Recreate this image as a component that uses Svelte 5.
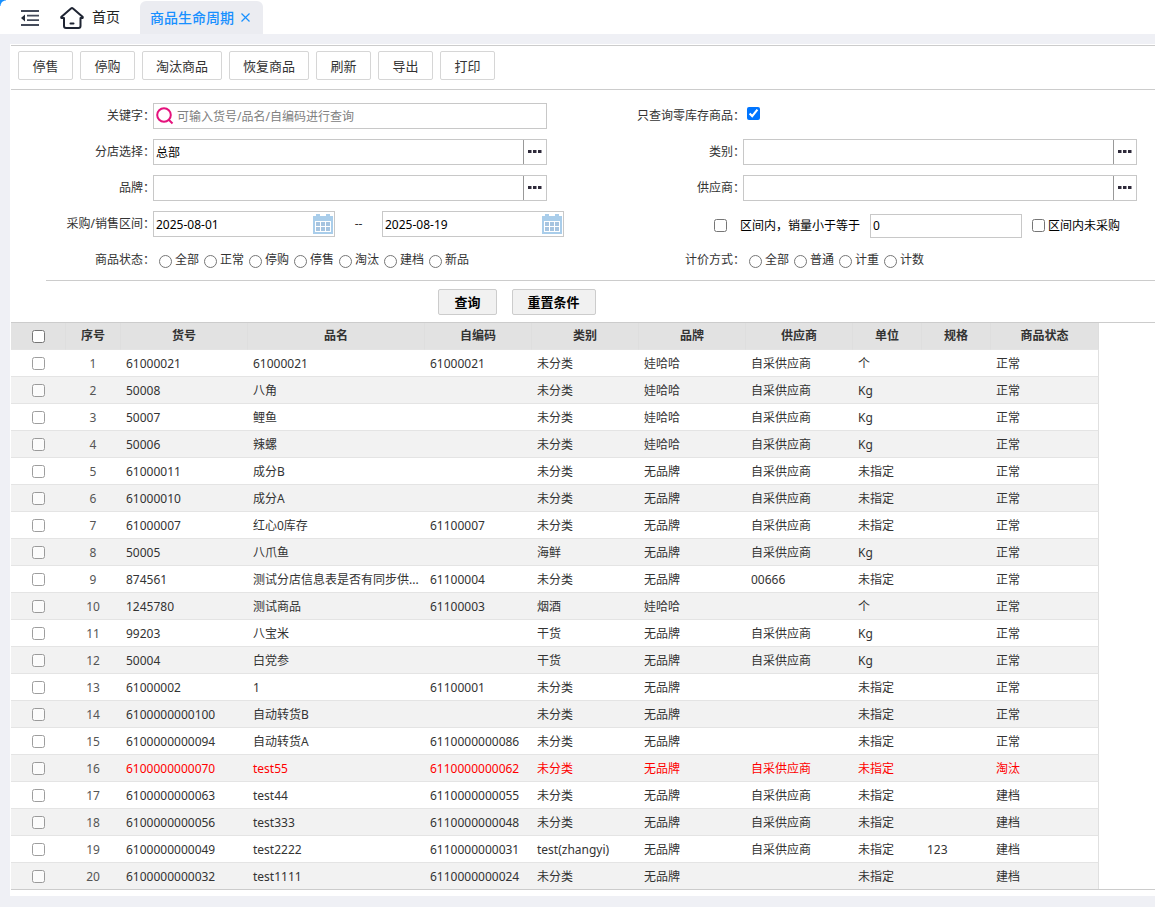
<script lang="ts">
  interface Row {
    code: string;
    name: string;
    alias?: string;
    category: string;
    brand: string;
    supplier?: string;
    unit: string;
    spec?: string;
    status: string;
  }

  const actions = ['停售', '停购', '淘汰商品', '恢复商品', '刷新', '导出', '打印'];
  const statuses = ['全部', '正常', '停购', '停售', '淘汰', '建档', '新品'];
  const pricing = ['全部', '普通', '计重', '计数'];

  const columns = [
    { title: '货号', width: 127 },
    { title: '品名', width: 177 },
    { title: '自编码', width: 107 },
    { title: '类别', width: 107 },
    { title: '品牌', width: 107 },
    { title: '供应商', width: 107 },
    { title: '单位', width: 69 },
    { title: '规格', width: 69 },
    { title: '商品状态', width: 108 }
  ];

  const OWN = '自采供应商';

  const rows: Row[] = [
    { code: '61000021', name: '61000021', alias: '61000021', category: '未分类', brand: '娃哈哈', supplier: OWN, unit: '个', status: '正常' },
    { code: '50008', name: '八角', category: '未分类', brand: '娃哈哈', supplier: OWN, unit: 'Kg', status: '正常' },
    { code: '50007', name: '鲤鱼', category: '未分类', brand: '娃哈哈', supplier: OWN, unit: 'Kg', status: '正常' },
    { code: '50006', name: '辣螺', category: '未分类', brand: '娃哈哈', supplier: OWN, unit: 'Kg', status: '正常' },
    { code: '61000011', name: '成分B', category: '未分类', brand: '无品牌', supplier: OWN, unit: '未指定', status: '正常' },
    { code: '61000010', name: '成分A', category: '未分类', brand: '无品牌', supplier: OWN, unit: '未指定', status: '正常' },
    { code: '61000007', name: '红心0库存', alias: '61100007', category: '未分类', brand: '无品牌', supplier: OWN, unit: '未指定', status: '正常' },
    { code: '50005', name: '八爪鱼', category: '海鲜', brand: '无品牌', supplier: OWN, unit: 'Kg', status: '正常' },
    { code: '874561', name: '测试分店信息表是否有同步供...', alias: '61100004', category: '未分类', brand: '无品牌', supplier: '00666', unit: '未指定', status: '正常' },
    { code: '1245780', name: '测试商品', alias: '61100003', category: '烟酒', brand: '娃哈哈', unit: '个', status: '正常' },
    { code: '99203', name: '八宝米', category: '干货', brand: '无品牌', supplier: OWN, unit: 'Kg', status: '正常' },
    { code: '50004', name: '白党参', category: '干货', brand: '无品牌', supplier: OWN, unit: 'Kg', status: '正常' },
    { code: '61000002', name: '1', alias: '61100001', category: '未分类', brand: '无品牌', unit: '未指定', status: '正常' },
    { code: '6100000000100', name: '自动转货B', category: '未分类', brand: '无品牌', unit: '未指定', status: '正常' },
    { code: '6100000000094', name: '自动转货A', alias: '6110000000086', category: '未分类', brand: '无品牌', unit: '未指定', status: '正常' },
    { code: '6100000000070', name: 'test55', alias: '6110000000062', category: '未分类', brand: '无品牌', supplier: OWN, unit: '未指定', status: '淘汰' },
    { code: '6100000000063', name: 'test44', alias: '6110000000055', category: '未分类', brand: '无品牌', supplier: OWN, unit: '未指定', status: '建档' },
    { code: '6100000000056', name: 'test333', alias: '6110000000048', category: '未分类', brand: '无品牌', supplier: OWN, unit: '未指定', status: '建档' },
    { code: '6100000000049', name: 'test2222', alias: '6110000000031', category: 'test(zhangyi)', brand: '无品牌', supplier: OWN, unit: '未指定', spec: '123', status: '建档' },
    { code: '6100000000032', name: 'test1111', alias: '6110000000024', category: '未分类', brand: '无品牌', unit: '未指定', status: '建档' }
  ];

  let keyword = $state('');
  let store = $state('总部');
  let brand = $state('');
  let category = $state('');
  let supplier = $state('');
  let dateFrom = $state('2025-08-01');
  let dateTo = $state('2025-08-19');
  let zeroStock = $state(true);
  let limitSales = $state(false);
  let maxSales = $state('0');
  let notPurchased = $state(false);
  let status = $state('');
  let priceMode = $state('');
  let selected = $state<boolean[]>(rows.map(() => false));

  function toggleAll(e: Event) {
    const checked = (e.target as HTMLInputElement).checked;
    selected = rows.map(() => checked);
  }

  function reset() {
    keyword = brand = category = supplier = status = priceMode = '';
    maxSales = '0';
    limitSales = notPurchased = false;
  }
</script>

{#snippet calendar()}
  <svg width="20" height="20" viewBox="0 0 20 20" aria-hidden="true">
    <path fill="#a9cdea" d="M0 2h3V0h4v2h6V0h4v2h3v18H0z" />
    <path fill="#fff" d="M2 7h16v11H2z" />
    <path fill="#a6c4e0" d="M3 8h4v4H3zM8 8h4v4H8zM13 8h4v4h-4zM3 13h4v4H3zM8 13h4v4H8zM13 13h4v4h-4z" />
  </svg>
{/snippet}

{#snippet dots()}
  <svg width="14" height="4" viewBox="0 0 14 4" aria-hidden="true">
    <path fill="#2f2a3a" d="M0 0h3.500v3H0zM5 0h3.500v3H5zM10 0h3.500v3h-3.500z" />
  </svg>
{/snippet}

<header class="tabs">
  <button class="icon-btn" aria-label="收起菜单">
    <svg width="20" height="18" viewBox="0 0 20 18" aria-hidden="true">
      <path fill="none" stroke="#444b5a" stroke-width="1.800" d="M1 3h18M7 7.600h12M7 12.200h12M1 17h18" />
      <path fill="#222936" d="M1 10l4-3.500v7z" />
    </svg>
  </button>
  <a class="home" href="#home">
    <svg width="24" height="24" viewBox="0 0 24 24" fill="none" stroke="#1f2533" stroke-width="2" stroke-linejoin="round" stroke-linecap="round" aria-hidden="true">
      <path d="M4 13H1.500q-.6-.6 0-1.200L11 3.500q1-.8 2 0l9.500 8.300q.6.600 0 1.200H20.500v8q0 2-2 2h-12.500q-2 0-2-2zM10.500 18.500h3" />
    </svg>
    <span>首页</span>
  </a>
  <div class="tab">
    <a href="#lifecycle">商品生命周期</a>
    <button class="icon-btn" aria-label="关闭">
      <svg width="9" height="9" viewBox="0 0 9 9" aria-hidden="true">
        <path stroke="#1890ff" stroke-width="1.200" d="M.5.5l8 8M8.500.5l-8 8" />
      </svg>
    </button>
  </div>
</header>

<main>
  <div class="toolbar">
    {#each actions as action}
      <button>{action}</button>
    {/each}
  </div>

  <div class="filters">
    <label class="caption" for="keyword">关键字：</label>
    <div class="box">
      <svg class="search" width="18" height="18" viewBox="0 0 18 18" fill="none" stroke="#e5127d" stroke-width="2" aria-hidden="true">
        <circle cx="8" cy="8" r="6.800" />
        <path d="M12.500 12.500l4 4" />
      </svg>
      <input id="keyword" type="text" placeholder="可输入货号/品名/自编码进行查询" bind:value={keyword} />
    </div>
    <label class="caption" for="zero">只查询零库存商品：</label>
    <div class="line zero">
      <input id="zero" type="checkbox" bind:checked={zeroStock} />
    </div>

    <label class="caption" for="store">分店选择：</label>
    <div class="box">
      <input id="store" type="text" bind:value={store} />
      <button class="more" aria-label="选择分店">{@render dots()}</button>
    </div>
    <label class="caption" for="category">类别：</label>
    <div class="box">
      <input id="category" type="text" bind:value={category} />
      <button class="more" aria-label="选择类别">{@render dots()}</button>
    </div>

    <label class="caption" for="brand">品牌：</label>
    <div class="box">
      <input id="brand" type="text" bind:value={brand} />
      <button class="more" aria-label="选择品牌">{@render dots()}</button>
    </div>
    <label class="caption" for="supplier">供应商：</label>
    <div class="box">
      <input id="supplier" type="text" bind:value={supplier} />
      <button class="more" aria-label="选择供应商">{@render dots()}</button>
    </div>

    <label class="caption" for="from">采购/销售区间：</label>
    <div class="line">
      <div class="box date">
        <input id="from" type="text" bind:value={dateFrom} />
        <button class="icon-btn" aria-label="选择开始日期">{@render calendar()}</button>
      </div>
      <span class="dash">--</span>
      <div class="box date">
        <input type="text" aria-label="结束日期" bind:value={dateTo} />
        <button class="icon-btn" aria-label="选择结束日期">{@render calendar()}</button>
      </div>
    </div>
    <div class="line range">
      <input id="limit" type="checkbox" bind:checked={limitSales} />
      <label class="limit" for="limit">区间内，销量小于等于</label>
      <div class="box amount">
        <input type="text" aria-label="销量" bind:value={maxSales} />
      </div>
      <label class="check"><input type="checkbox" bind:checked={notPurchased} />区间内未采购</label>
    </div>

    <span class="caption">商品状态：</span>
    <div class="line radios" role="radiogroup" aria-label="商品状态">
      {#each statuses as s}
        <label><input type="radio" name="status" value={s} bind:group={status} />{s}</label>
      {/each}
    </div>
    <span class="caption">计价方式：</span>
    <div class="line radios" role="radiogroup" aria-label="计价方式">
      {#each pricing as p}
        <label><input type="radio" name="pricing" value={p} bind:group={priceMode} />{p}</label>
      {/each}
    </div>
  </div>

  <div class="submit">
    <button>查询</button>
    <button onclick={reset}>重置条件</button>
  </div>

  <div class="grid">
    <table>
      <colgroup>
        <col style="width:55px" />
        <col style="width:55px" />
        {#each columns as col}
          <col style="width:{col.width}px" />
        {/each}
      </colgroup>
      <thead>
        <tr>
          <th><input type="checkbox" aria-label="全选" onchange={toggleAll} /></th>
          <th>序号</th>
          {#each columns as col}
            <th>{col.title}</th>
          {/each}
        </tr>
      </thead>
      <tbody>
        {#each rows as row, i}
          <tr class:retired={row.status === '淘汰'}>
            <td class="pick"><input type="checkbox" aria-label="选择 {row.code}" bind:checked={selected[i]} /></td>
            <td class="index">{i + 1}</td>
            <td>{row.code}</td>
            <td>{row.name}</td>
            <td>{row.alias ?? ''}</td>
            <td>{row.category}</td>
            <td>{row.brand}</td>
            <td>{row.supplier ?? ''}</td>
            <td>{row.unit}</td>
            <td>{row.spec ?? ''}</td>
            <td>{row.status}</td>
          </tr>
        {/each}
      </tbody>
    </table>
  </div>
</main>

<style>
  :global(body) {
    background: #eff0f5;
    color: #333;
    font: 12px/18px 'Noto Sans', 'Noto Sans CJK SC', sans-serif;
  }

  button,
  input {
    font-family: inherit;
    font-size: 12px;
    box-sizing: border-box;
  }

  button {
    cursor: pointer;
  }

  input[type='checkbox'],
  input[type='radio'] {
    width: 13px;
    height: 13px;
    margin: 0;
    flex-shrink: 0;
  }

  .icon-btn {
    display: flex;
    padding: 0;
    border: none;
    background: none;
  }

  /* Tab strip */
  .tabs {
    display: flex;
    align-items: center;
    height: 34px;
    padding-left: 20px;
    background: radial-gradient(circle at 100% 100%, #fff 5px, #1890ff 6px) 0 0 / 6px 6px no-repeat #fff;
    font-size: 14px;
  }

  .home {
    display: flex;
    align-items: center;
    gap: 8px;
    margin: 0 20px;
    color: #222;
    text-decoration: none;
  }

  .tab {
    display: flex;
    align-items: center;
    align-self: flex-end;
    gap: 7px;
    height: 33px;
    padding: 0 13px 0 10px;
    border-radius: 6px 6px 0 0;
    background: #ebecf1;
  }

  .tab a {
    color: #1890ff;
    text-decoration: none;
    font-weight: 500;
  }

  main {
    margin: 10px 0 11px 10px;
    padding: 1px 0 6px 1px;
    background: #fff;
  }

  .toolbar {
    display: flex;
    gap: 7px;
    padding: 5px 7px 9px;
    border-top: 1px solid #ccc;
    border-bottom: 1px solid #ccc;
  }

  .toolbar button {
    min-width: 55px;
    height: 29px;
    padding: 0 13px 1px;
    border: 1px solid #d6d6d6;
    border-radius: 2px;
    background: #fff;
    color: #333;
    font-size: 13px;
  }

  /* Filter form */
  .filters {
    display: grid;
    grid-template-columns: 142px minmax(0, 1fr) 196px minmax(0, 1fr);
    grid-auto-rows: 26px;
    row-gap: 10px;
    padding: 13px 18px 7px 0;
  }

  .caption {
    margin-right: -2px;
    line-height: 26px;
    text-align: right;
    white-space: nowrap;
  }

  .box {
    display: flex;
    box-sizing: border-box;
    height: 26px;
    border: 1px solid #c8c8c8;
    background: #fff;
  }

  .box input {
    flex: 1;
    width: 100%;
    min-width: 0;
    padding: 0 2px;
    border: none;
    outline: none;
    background: none;
    color: #000;
  }

  .box input::placeholder {
    color: #808080;
  }

  .search {
    flex-shrink: 0;
    margin: 3px 1px 0 2px;
  }

  .more {
    display: flex;
    flex-shrink: 0;
    align-items: center;
    justify-content: center;
    width: 23px;
    padding: 0;
    border: none;
    border-left: 1px solid #999;
    background: none;
  }

  .line {
    display: flex;
    align-items: center;
    white-space: nowrap;
  }

  .zero {
    padding: 0 0 5px 4px;
  }

  .date {
    flex: none;
    align-items: center;
    width: 182px;
    padding-right: 1px;
  }

  .date input {
    height: 24px;
  }

  .dash {
    flex: none;
    width: 47px;
    text-align: center;
  }

  .range {
    grid-column: span 2;
    justify-content: flex-end;
    padding: 3px 17px 0 0;
    color: #000;
  }

  .limit {
    margin: 0 10px 0 13px;
  }

  .amount {
    width: 152px;
    height: 24px;
    margin-right: 10px;
  }

  .check {
    display: flex;
    align-items: center;
    gap: 3px;
  }

  .radios {
    padding-left: 1px;
  }

  .radios label {
    display: flex;
    line-height: 26px;
  }

  .radios input {
    margin: 8px 3px 0 5px;
  }

  .submit {
    display: flex;
    justify-content: center;
    gap: 15px;
    margin-left: 35px;
    padding: 8px 167px 7px 0;
    border-top: 1px solid #ccc;
  }

  .submit button {
    height: 26px;
    padding: 0 15px 2px;
    border: 1px solid #ccc;
    border-radius: 2px;
    background: #f1f1f1;
    color: #000;
    font-size: 13px;
    font-weight: bold;
  }

  /* Result table */
  .grid {
    overflow-x: auto;
    border-top: 1px solid #ccc;
    border-bottom: 1px solid #ccc;
  }

  table {
    width: 1088px;
    table-layout: fixed;
    border-collapse: separate;
    border-spacing: 0;
  }

  th,
  td {
    box-sizing: border-box;
    height: 27px;
    padding: 0 4px;
    border-bottom: 1px solid #e4e4e4;
    line-height: 18px;
    white-space: nowrap;
    overflow: hidden;
  }

  th {
    border-right: 1px solid #dedede;
    background: #e2e2e2;
    text-align: center;
  }

  td {
    padding: 2px 4px 0 5px;
  }

  .pick {
    padding: 0 4px;
  }

  th input,
  .pick input {
    display: block;
    margin: 0 auto !important;
  }

  .pick input {
    opacity: 0.7;
  }

  td:last-child {
    border-right: 1px solid #e0e0e0;
  }

  tbody tr:nth-child(even) {
    background: #f2f2f2;
  }

  tbody tr:last-child td {
    height: 26px;
    border-bottom: none;
  }

  .index {
    padding: 2px 5px 0 4px;
    color: #555;
    text-align: center;
  }

  .retired td {
    color: #f00;
  }

  .retired .index {
    color: #555;
  }
</style>
